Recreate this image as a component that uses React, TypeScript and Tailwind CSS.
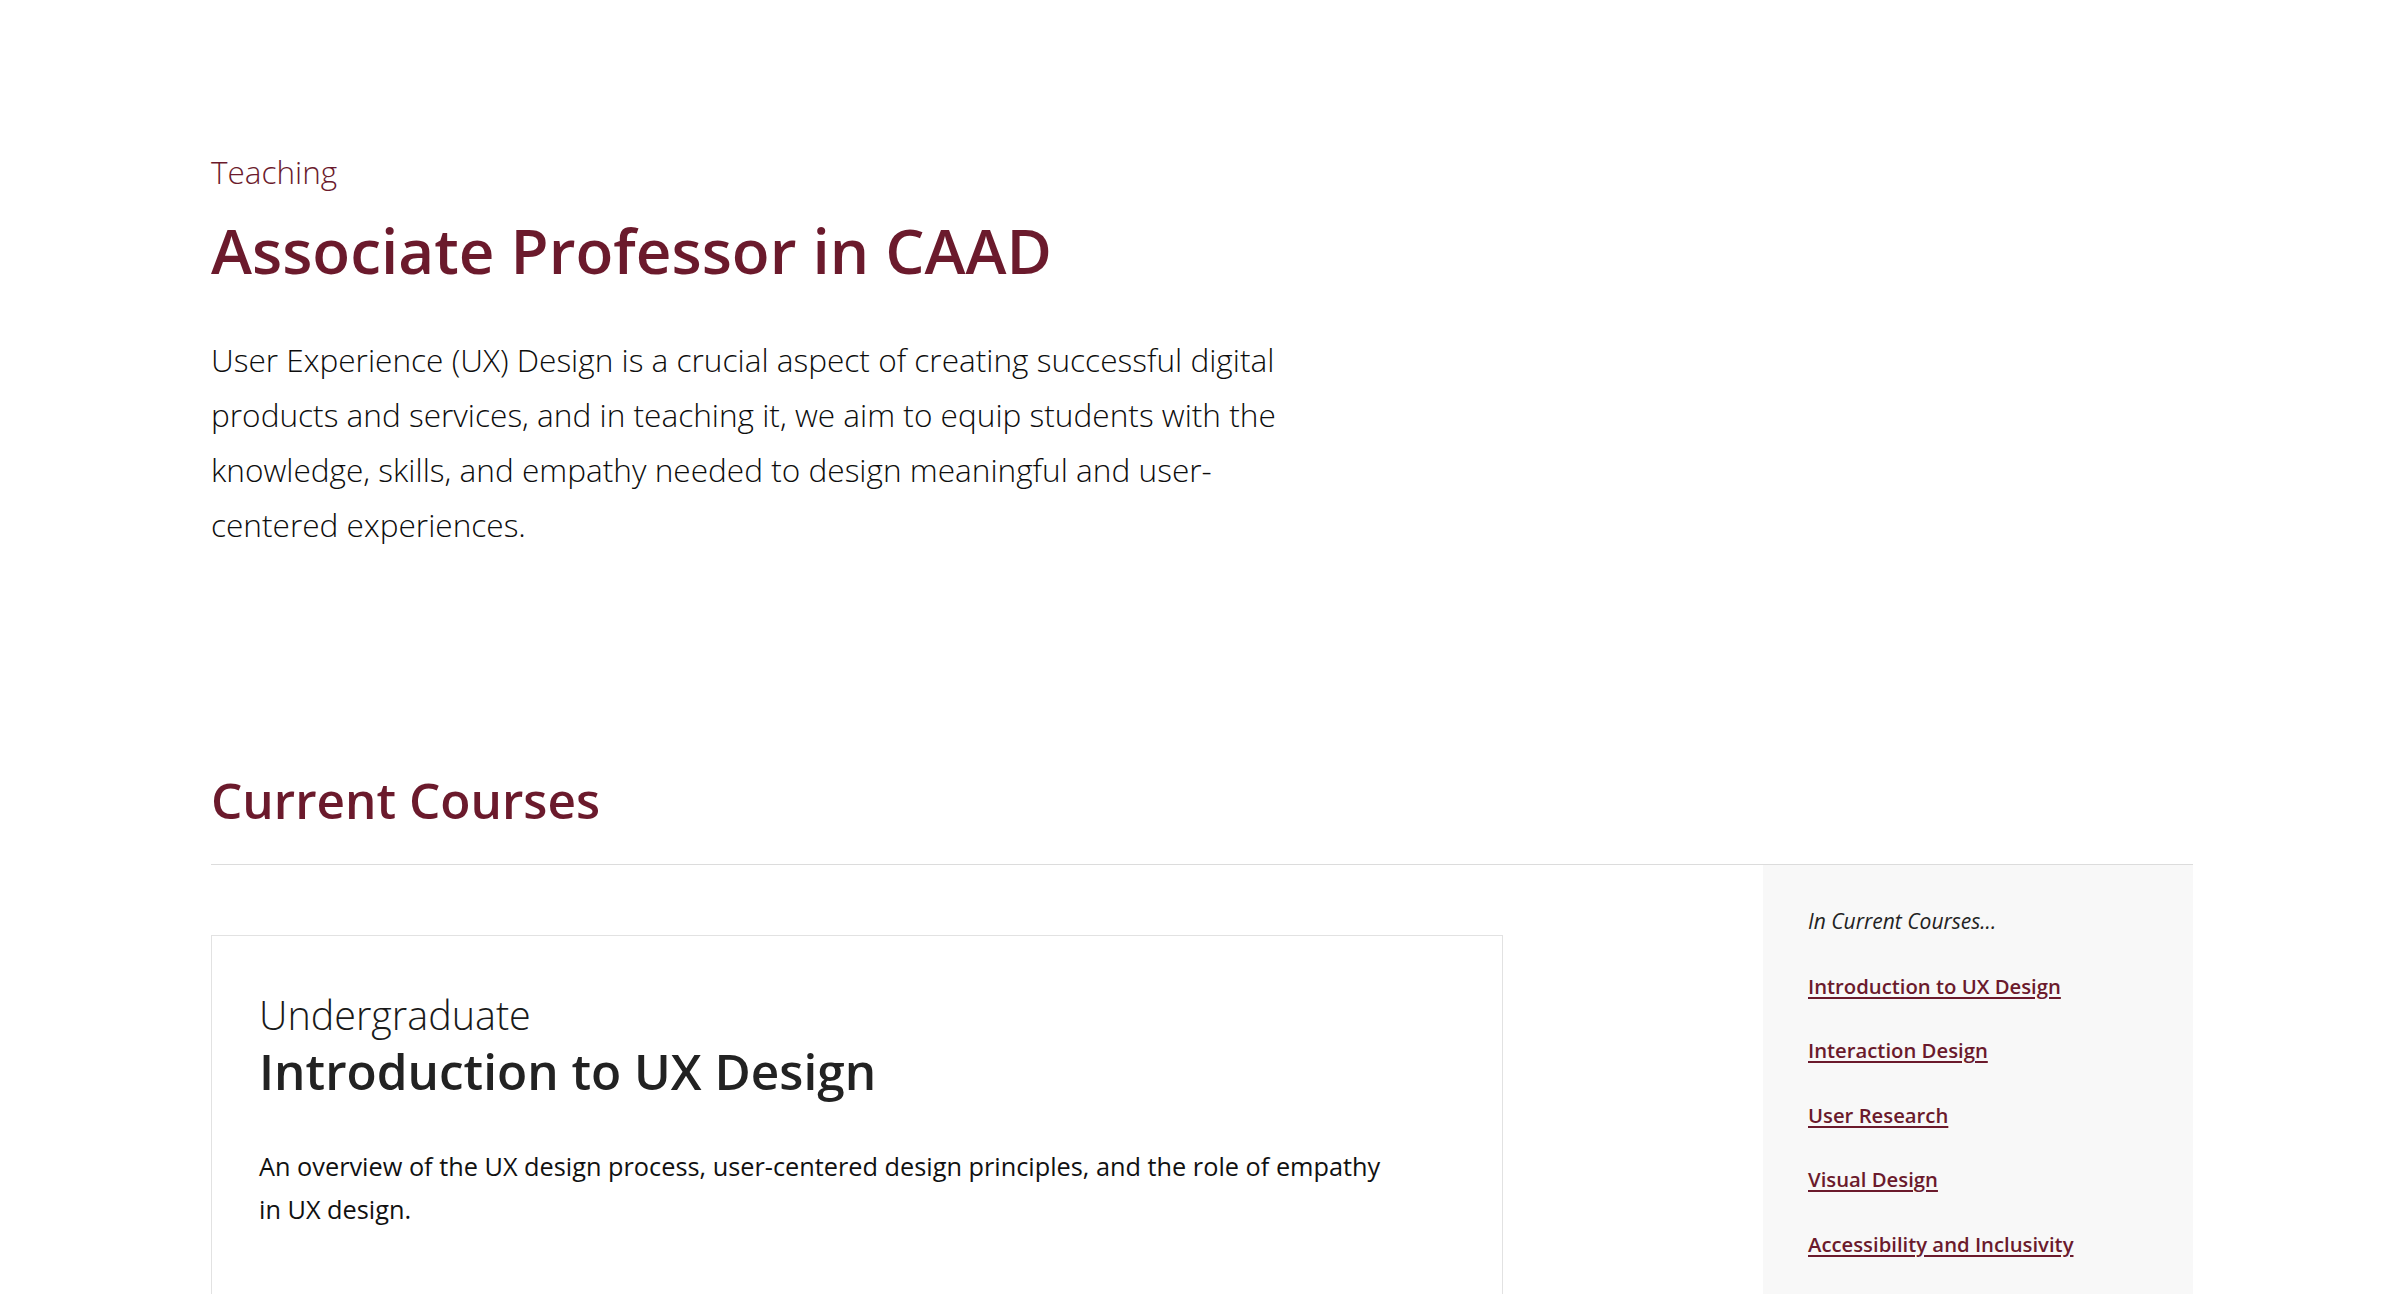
const links = [
  'Introduction to UX Design',
  'Interaction Design',
  'User Research',
  'Visual Design',
  'Accessibility and Inclusivity',
];

export default function App() {
  return (
    <div className="min-h-screen bg-white font-['Open_Sans',sans-serif] text-[#222]">
      <div className="w-[1982px] ml-[211px] pt-[152px]">
        <section>
          <p className="text-[31.5px] leading-[40px] font-light text-[#6b1a2c]">Teaching</p>
          <h1 className="mt-[22px] text-[62px] leading-[72px] font-semibold text-[#6b1a2c]">
            Associate Professor in CAAD
          </h1>
          <p className="mt-[46px] max-w-[1110px] text-[31.6px] leading-[55px] font-light text-[#0d0d0d]">
            User Experience (UX) Design is a crucial aspect of creating successful digital products and services,
            and in teaching it, we aim to equip students with the knowledge, skills, and empathy needed to design
            meaningful and user-centered experiences.
          </p>
        </section>

        <section className="mt-[218px]">
          <h2 className="text-[49.5px] leading-[60px] font-semibold text-[#6b1a2c]">Current Courses</h2>
          <div className="mt-[34px] border-t border-[#dcdcdc]" />

          <div className="flex justify-between items-start">
            <article className="mt-[70px] w-[1292px] border border-[#e2e2e2] pt-[55px] pb-[80px] pl-[47px] pr-[40px]">
              <p className="text-[39.5px] leading-[48px] font-light text-[#1a1a1a]">Undergraduate</p>
              <h3 className="mt-[4px] text-[49.5px] leading-[56px] font-semibold text-[#222]">
                Introduction to UX Design
              </h3>
              <p className="mt-[46px] max-w-[1145px] text-[25.3px] leading-[43px] text-[#111]">
                An overview of the UX design process, user-centered design principles, and the role of empathy in UX
                design.
              </p>
            </article>

            <aside className="w-[430px] bg-[#f8f8f8] pt-[41px] pb-[60px] pl-[45px] pr-[30px]">
              <p className="text-[21px] leading-[30px] italic text-[#222]">In Current Courses...</p>
              <ul>
                {links.map((l) => (
                  <li key={l} className="mt-[34.5px]">
                    <a
                      href="#"
                      className="text-[20.3px] leading-[30px] font-semibold text-[#6b1a2c] underline underline-offset-[3px]"
                    >
                      {l}
                    </a>
                  </li>
                ))}
              </ul>
            </aside>
          </div>
        </section>
      </div>
    </div>
  );
}
